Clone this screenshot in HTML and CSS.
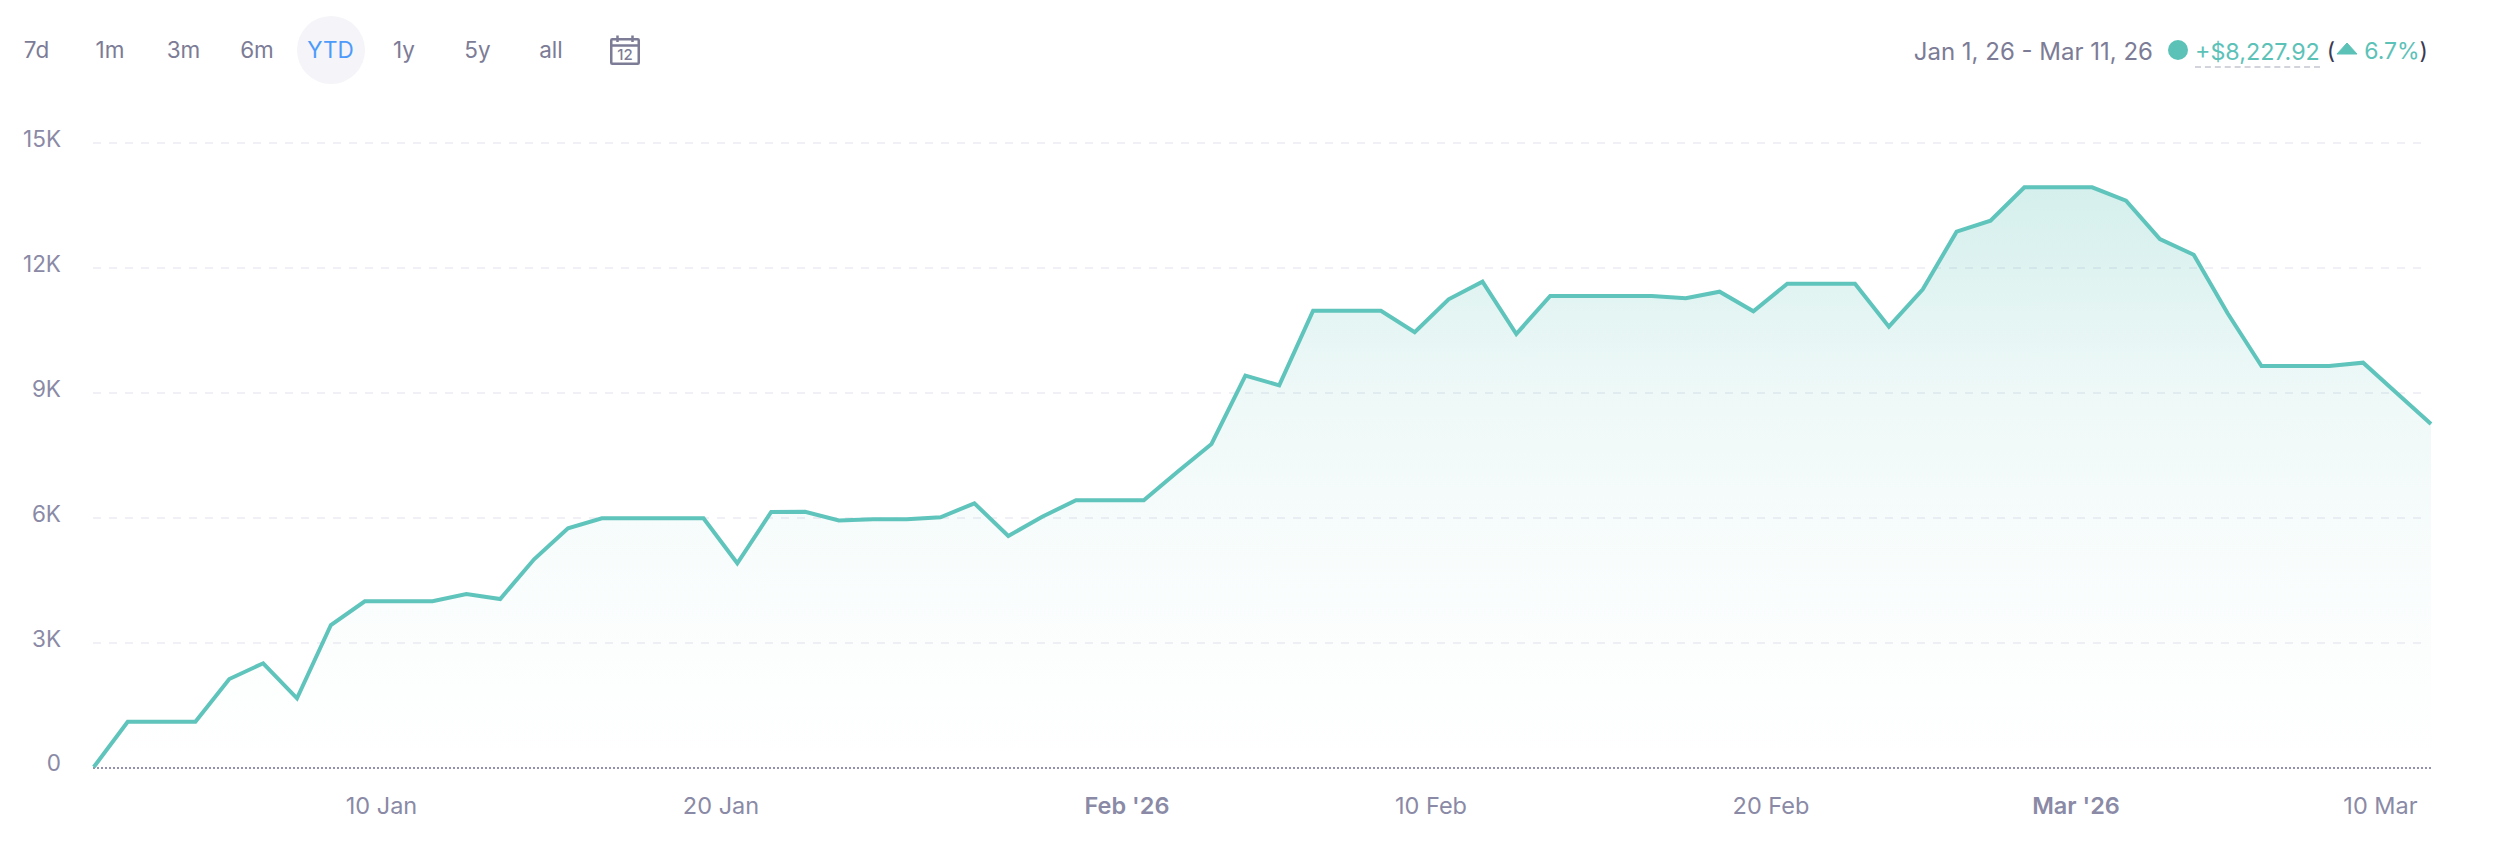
FILE: index.html
```html
<!DOCTYPE html>
<html lang="en">
<head>
<meta charset="utf-8">
<title>Portfolio chart</title>
<link rel="stylesheet" href="styles.css">
</head>
<body>
<main class="panel">
  <header class="toolbar">
    <nav class="ranges">
      <button class="range">7d</button>
      <button class="range">1m</button>
      <button class="range">3m</button>
      <button class="range">6m</button>
      <button class="range range-active">YTD</button>
      <button class="range">1y</button>
      <button class="range">5y</button>
      <button class="range">all</button>
      <button class="range range-icon" aria-label="Pick dates">
        <svg class="cal" viewBox="0 0 30 30" width="30" height="30">
          <rect x="1.25" y="4.25" width="27.5" height="24.5" rx="1" class="cal-line"/>
          <path d="M1.25 10.5H28.75M7.5 0.5V7M22.5 0.5V7" class="cal-line"/>
          <text x="15" y="25" class="cal-num">12</text>
        </svg>
      </button>
    </nav>
    <div class="summary">
      <span class="dates">Jan 1, 26 - Mar 11, 26</span>
      <span class="dot"></span>
      <span class="gain">+$8,227.92</span>
      <span class="paren">(<svg class="tri" viewBox="0 0 22 13" width="22" height="13"><path d="M11 1 21 12H1Z"/></svg><span class="pct">6.7%</span>)</span>
    </div>
  </header>
  <svg class="chart" viewBox="0 0 2500 752" width="2500" height="752">
    <defs>
      <linearGradient id="area" gradientUnits="userSpaceOnUse" x1="0" y1="87" x2="0" y2="668">
        <stop offset="0" stop-color="#5cc2b8" stop-opacity="0.26"/>
        <stop offset="0.355" stop-color="#5cc2b8" stop-opacity="0.105"/>
        <stop offset="0.57" stop-color="#5cc2b8" stop-opacity="0.055"/>
        <stop offset="0.785" stop-color="#5cc2b8" stop-opacity="0.02"/>
        <stop offset="1" stop-color="#5cc2b8" stop-opacity="0"/>
      </linearGradient>
    </defs>
    <g class="grid">
      <line x1="93" x2="2427" y1="43" y2="43"/>
      <line x1="93" x2="2427" y1="168" y2="168"/>
      <line x1="93" x2="2427" y1="293" y2="293"/>
      <line x1="93" x2="2427" y1="418" y2="418"/>
      <line x1="93" x2="2427" y1="543" y2="543"/>
    </g>
    <polygon class="area" points="93.8,667 127.7,621.7 161.5,621.7 195.4,621.7 229.3,579 263.2,563.3 297,598.3 330.9,525 364.8,501.3 398.6,501.3 432.5,501.3 466.4,494 500.2,499 534.1,459.3 568,428.3 601.9,418.3 635.7,418.3 669.6,418.3 703.5,418.3 737.3,463.3 771.2,412 805.1,411.7 838.9,420.5 872.8,419.3 906.7,419.3 940.5,417.3 974.4,403.3 1008.3,436 1042.2,416.7 1076,400.3 1109.9,400.3 1143.8,400.3 1177.6,371.7 1211.5,344 1245.4,275.7 1279.2,285.3 1313.1,210.7 1347,210.7 1380.9,210.7 1414.7,232.3 1448.6,199.3 1482.5,181.7 1516.3,234 1550.2,196 1584.1,196 1617.9,196 1651.8,196 1685.7,198.3 1719.6,191.7 1753.4,211.3 1787.3,183.7 1821.2,183.7 1855,183.7 1888.9,226.7 1922.8,189.3 1956.6,131.7 1990.5,120.7 2024.4,87.3 2058.2,87.3 2092.1,87.3 2126,100.7 2159.9,139 2193.7,154.7 2227.6,213.3 2261.5,266 2295.3,266 2329.2,266 2363.1,262.7 2396.9,293.3 2431,324 2431,668 93.8,668"/>
    <line class="base" x1="93" x2="2431" y1="668" y2="668"/>
    <polyline class="trend" points="93.8,667 127.7,621.7 161.5,621.7 195.4,621.7 229.3,579 263.2,563.3 297,598.3 330.9,525 364.8,501.3 398.6,501.3 432.5,501.3 466.4,494 500.2,499 534.1,459.3 568,428.3 601.9,418.3 635.7,418.3 669.6,418.3 703.5,418.3 737.3,463.3 771.2,412 805.1,411.7 838.9,420.5 872.8,419.3 906.7,419.3 940.5,417.3 974.4,403.3 1008.3,436 1042.2,416.7 1076,400.3 1109.9,400.3 1143.8,400.3 1177.6,371.7 1211.5,344 1245.4,275.7 1279.2,285.3 1313.1,210.7 1347,210.7 1380.9,210.7 1414.7,232.3 1448.6,199.3 1482.5,181.7 1516.3,234 1550.2,196 1584.1,196 1617.9,196 1651.8,196 1685.7,198.3 1719.6,191.7 1753.4,211.3 1787.3,183.7 1821.2,183.7 1855,183.7 1888.9,226.7 1922.8,189.3 1956.6,131.7 1990.5,120.7 2024.4,87.3 2058.2,87.3 2092.1,87.3 2126,100.7 2159.9,139 2193.7,154.7 2227.6,213.3 2261.5,266 2295.3,266 2329.2,266 2363.1,262.7 2396.9,293.3 2431,324"/>
    <g class="ylabels">
      <text x="61" y="47">15K</text>
      <text x="61" y="172">12K</text>
      <text x="61" y="297">9K</text>
      <text x="61" y="422">6K</text>
      <text x="61" y="547">3K</text>
      <text x="61" y="671">0</text>
    </g>
    <g class="xlabels">
      <text x="381.5" y="714">10 Jan</text>
      <text x="721" y="714">20 Jan</text>
      <text x="1127" y="714" class="major">Feb '26</text>
      <text x="1431" y="714">10 Feb</text>
      <text x="1771" y="714">20 Feb</text>
      <text x="2076" y="714" class="major">Mar '26</text>
      <text x="2380.5" y="714">10 Mar</text>
    </g>
  </svg>
</main>
</body>
</html>
```
FILE: styles.css
```css
* { box-sizing: border-box; }
html, body { margin: 0; padding: 0; background: #fff; overflow: hidden; }
body { width: 2500px; height: 852px; font-family: Inter, "Liberation Sans", sans-serif; color: #7c7c96; }
.panel { display: flex; flex-direction: column; width: 2500px; height: 852px; }
.toolbar { display: flex; align-items: center; justify-content: space-between; height: 100px; padding: 0 72px 0 2.5px; }
.ranges { display: flex; gap: 5.5px; }
.range { width: 68px; height: 68px; padding: 0; border: 0; border-radius: 50%; background: none; color: #7c7c96; font: 400 22.5px/1 Inter, "Liberation Sans", sans-serif; display: flex; align-items: center; justify-content: center; }
.range-active { background: #f4f4f9; color: #4c9bfb; }
.cal { display: block; }
.cal-line { fill: none; stroke: #7c7c96; stroke-width: 2.5; }
.cal-num { fill: #7c7c96; font: 500 15px Inter, "Liberation Sans", sans-serif; text-anchor: middle; }
.summary { display: flex; align-items: center; font-size: 23px; line-height: 1; padding-top: 4px; }
.dates { color: #7c7c96; font-size: 24px; }
.dot { width: 20px; height: 20px; margin: -4px 7px 0 15px; border-radius: 50%; background: #5cc2b8; }
.gain { color: #5cc2b8; font-size: 23.3px; border-bottom: 2px dashed #d3d3dc; padding-bottom: 2px; margin-top: 4px; }
.paren { display: flex; align-items: center; color: #3a3a52; margin-left: 7px; }
.tri { fill: #5cc2b8; stroke: #5cc2b8; stroke-width: 1; stroke-linejoin: round; margin: 0 6px 7px 1px; }
.pct { color: #5cc2b8; }
.chart { display: block; }
.grid line { stroke: #f0f0f6; stroke-width: 2; stroke-dasharray: 8 8; }
.area { fill: url(#area); }
.base { stroke: #9292ac; stroke-width: 2; stroke-dasharray: 2 2; }
.trend { fill: none; stroke: #5fc4bb; stroke-width: 4; stroke-linejoin: miter; }
.ylabels text { fill: #8a8aa6; font: 400 22.5px Inter, "Liberation Sans", sans-serif; text-anchor: end; }
.xlabels text { fill: #8a8aa6; font: 400 23.5px Inter, "Liberation Sans", sans-serif; text-anchor: middle; }
.xlabels .major { font-weight: 600; }
```
